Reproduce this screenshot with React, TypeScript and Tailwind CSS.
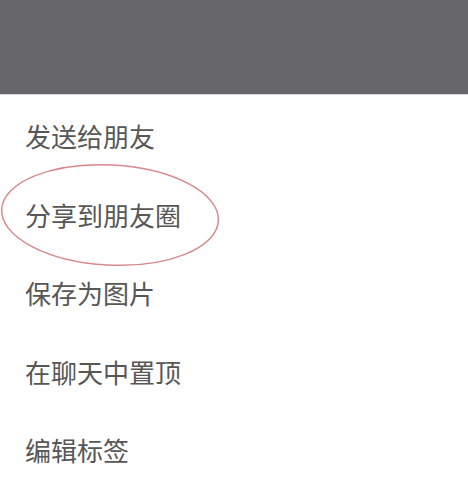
import React from "react";

const items = ["发送给朋友", "分享到朋友圈", "保存为图片", "在聊天中置顶", "编辑标签"];

export default function App() {
  return (
    <div
      className="relative w-[468px] h-[477px] overflow-hidden bg-white"
      style={{ fontFamily: '"Noto Sans CJK SC", "Noto Sans", sans-serif' }}
    >
      <div className="h-[95px] bg-[#676668] border-b border-[#d8d8d8]" />
      <div className="flex flex-col pt-[2px]">
        {items.map((t) => (
          <div
            key={t}
            className="h-[78.5px] flex items-center pl-[25px] text-[26px] leading-none text-[#575757]"
          >
            {t}
          </div>
        ))}
      </div>
      <svg
        className="absolute left-0 top-[160px] pointer-events-none"
        width="230"
        height="112"
        viewBox="0 0 230 112"
      >
        <ellipse
          cx="110"
          cy="55"
          rx="108.5"
          ry="50"
          transform="rotate(3 110 55)"
          fill="none"
          stroke="#d8898d"
          strokeWidth="1.5"
        />
      </svg>
    </div>
  );
}
